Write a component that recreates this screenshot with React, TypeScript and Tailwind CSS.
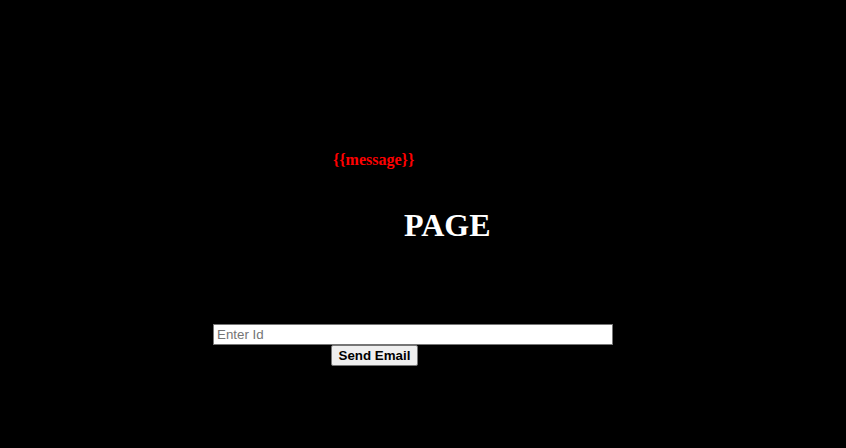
export default function App() {
  return (
    <div className="min-h-[448px] w-full bg-black pt-[151px]">
      <p
        className="ml-[333px] text-[16px] font-bold leading-[18px] text-[#ff0000]"
        style={{ fontFamily: '"Liberation Serif", serif' }}
      >
        {'{{message}}'}
      </p>
      <h1
        className="mt-[38px] ml-[404px] text-[32px] font-bold leading-[37px] text-white"
        style={{ fontFamily: '"Liberation Serif", serif' }}
      >
        PAGE
      </h1>
      <div className="mt-[80px] ml-[213px] flex flex-col items-start" style={{ fontFamily: '"Liberation Sans", Arial, sans-serif' }}>
        <input
          type="text"
          placeholder="Enter Id"
          className="h-[21px] w-[400px] border border-[#767676] bg-white px-[3px] text-[13.33px] text-black outline-none placeholder:text-[#757575]"
        />
        <button className="ml-[118px] h-[21px] w-[87px] rounded-[2px] border border-[#767676] bg-[#efefef] text-[13.33px] font-bold leading-[15px] text-black">
          Send Email
        </button>
      </div>
    </div>
  );
}
